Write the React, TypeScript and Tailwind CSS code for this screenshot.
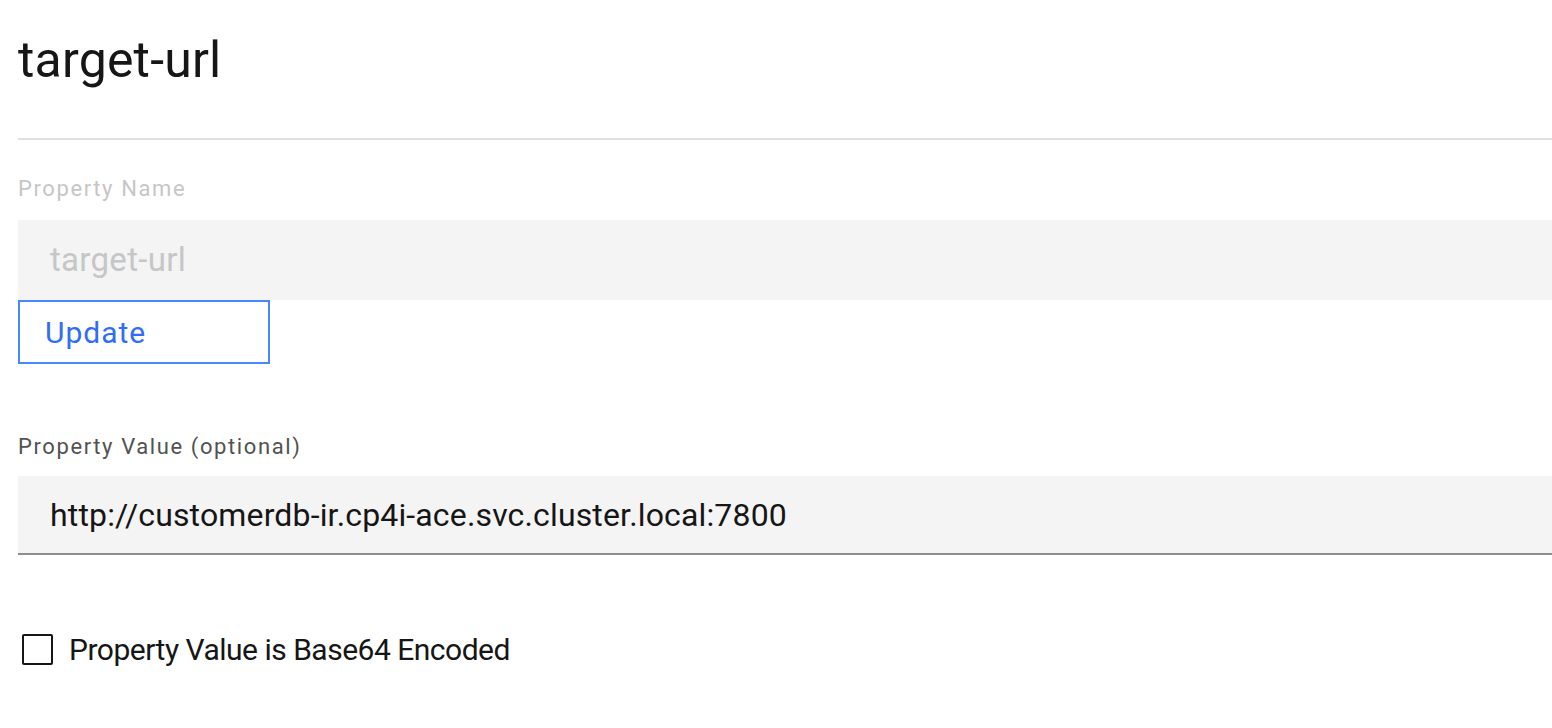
import React, { useState } from 'react';

export default function App() {
  const [encoded, setEncoded] = useState(false);

  return (
    <div className="min-h-screen bg-white font-['Roboto',sans-serif] text-[#161616]">
      <div className="pl-[18px]">
        {/* Header */}
        <div className="pt-[30px] pb-[48px]">
          <h1 className="text-[50px] leading-[60px] tracking-[0.2px] font-normal text-[#161616]">target-url</h1>
        </div>
        <div className="h-[2px] bg-[#e0e0e0]" />

        {/* Property name (read only) */}
        <div className="pt-[36px]">
          <label className="block text-[22px] leading-[26px] tracking-[1.6px] text-[#c6c6c6]">Property Name</label>
          <div className="mt-[18px] h-[80px] bg-[#f4f4f4] flex items-center pl-[32px]">
            <span className="text-[33px] tracking-[0.3px] text-[#c6c6c6]">target-url</span>
          </div>
          <button className="w-[252px] h-[64px] border-2 border-[#4589ff] text-left pl-[25px] text-[30px] tracking-[1px] text-[#2f6df6] bg-white">
            Update
          </button>
        </div>

        {/* Property value */}
        <div className="pt-[70px]">
          <label className="block text-[22px] leading-[26px] tracking-[1.6px] text-[#525252]">Property Value (optional)</label>
          <div className="mt-[16px] h-[79px] bg-[#f4f4f4] border-b-2 border-[#8d8d8d] flex items-center pl-[32px]">
            <span className="text-[32px] tracking-[0.15px] text-[#161616]">http://customerdb-ir.cp4i-ace.svc.cluster.local:7800</span>
          </div>
        </div>

        {/* Checkbox */}
        <label className="mt-[72px] flex items-center gap-[16px] pl-[4px] cursor-pointer select-none">
          <span
            onClick={() => setEncoded(!encoded)}
            className="w-[31px] h-[31px] border-2 border-[#161616] rounded-[2px] bg-white"
          />
          <span className="text-[30px] tracking-[-0.5px] text-[#161616]">Property Value is Base64 Encoded</span>
        </label>
      </div>
    </div>
  );
}
